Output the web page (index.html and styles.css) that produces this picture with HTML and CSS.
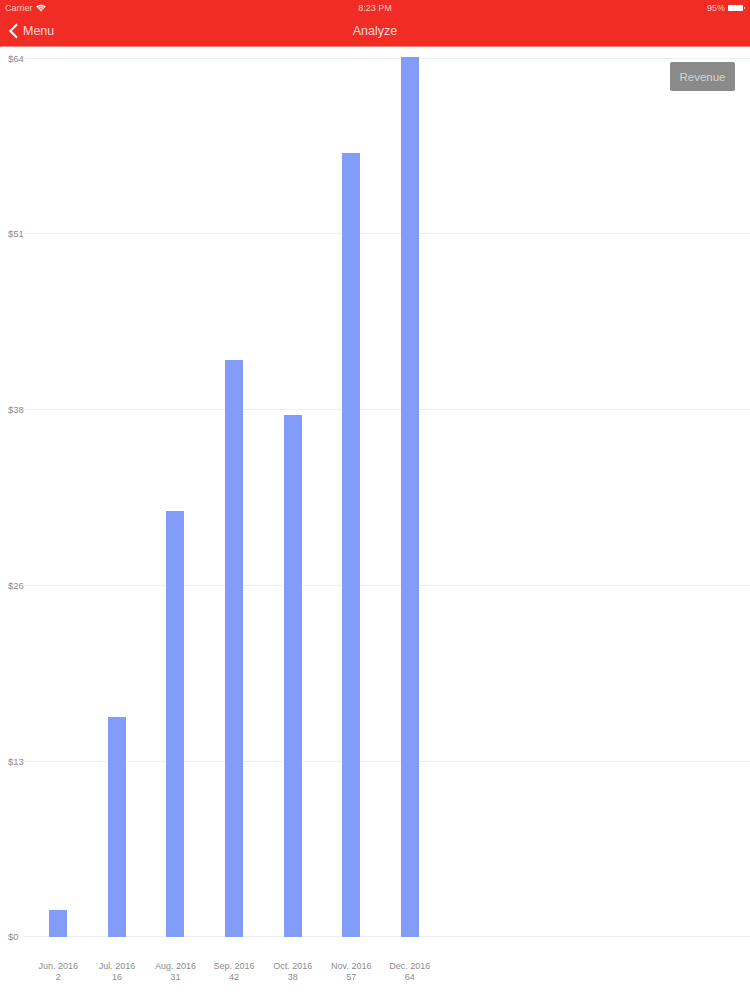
FILE: index.html
```html
<!DOCTYPE html>
<html>
<head>
    <link rel="stylesheet" href="styles.css">
</head>
<body>
    <header class="topbar">
        <div class="status-bar">
            <div class="status-left">
                <span>Carrier</span>
                <svg class="wifi" viewBox="0 0 12 9" width="10" height="8">
                    <path d="M6 8.6 L0.2 2.8 C3.4 -0.3 8.6 -0.3 11.8 2.8 Z" fill="#fff" opacity="0.95"/>
                    <path d="M2 4.3 C4.3 2.3 7.7 2.3 10 4.3" fill="none" stroke="#f02c24" stroke-width="0.8"/>
                    <path d="M3.6 6 C5 4.9 7 4.9 8.4 6" fill="none" stroke="#f02c24" stroke-width="0.8"/>
                </svg>
            </div>
            <span class="status-time">8:23 PM</span>
            <div class="status-right">
                <span>95%</span>
                <span class="battery"></span>
            </div>
        </div>
        <nav class="nav-bar">
            <a class="back-link">
                <svg class="chevron" viewBox="0 0 11 18" width="11" height="16">
                    <path d="M9.5 1.5 L2 9 L9.5 16.5" fill="none" stroke="#fff" stroke-width="2.4"/>
                </svg>
                <span>Menu</span>
            </a>
            <span class="nav-title">Analyze</span>
        </nav>
    </header>

    <main class="chart">
        <div class="plot">
            <div class="grid-row"><span class="y-label">$64</span><span class="grid-line"></span></div>
            <div class="grid-row"><span class="y-label">$51</span><span class="grid-line"></span></div>
            <div class="grid-row"><span class="y-label">$38</span><span class="grid-line"></span></div>
            <div class="grid-row"><span class="y-label">$26</span><span class="grid-line"></span></div>
            <div class="grid-row"><span class="y-label">$13</span><span class="grid-line"></span></div>
            <div class="grid-row"><span class="y-label">$0</span><span class="grid-line"></span></div>

            <div class="bars">
                <div class="bar-slot"><div class="bar" style="height: 27.5px"></div></div>
                <div class="bar-slot"><div class="bar" style="height: 220px"></div></div>
                <div class="bar-slot"><div class="bar" style="height: 426px"></div></div>
                <div class="bar-slot"><div class="bar" style="height: 577.5px"></div></div>
                <div class="bar-slot"><div class="bar" style="height: 522.5px"></div></div>
                <div class="bar-slot"><div class="bar" style="height: 784px"></div></div>
                <div class="bar-slot"><div class="bar" style="height: 880px"></div></div>
            </div>

            <button class="revenue-btn">Revenue</button>
        </div>

        <div class="x-axis">
            <div class="x-label">Jun. 2016<br>2</div>
            <div class="x-label">Jul. 2016<br>16</div>
            <div class="x-label">Aug. 2016<br>31</div>
            <div class="x-label">Sep. 2016<br>42</div>
            <div class="x-label">Oct. 2016<br>38</div>
            <div class="x-label">Nov. 2016<br>57</div>
            <div class="x-label">Dec. 2016<br>64</div>
        </div>
    </main>
</body>
</html>
```

FILE: styles.css
```css
body {
    margin: 0;
    padding: 0;
    height: 1000px;
    overflow: hidden;
    background: #fff;
    font-family: "Liberation Sans", Arial, sans-serif;
}

.topbar {
    height: 46px;
    background: #f02c24;
    color: #fff;
    border-bottom: 1px solid #f6807b;
}

.status-bar {
    height: 15px;
    padding: 0 5px;
    display: flex;
    align-items: center;
    justify-content: space-between;
    position: relative;
    font-size: 9px;
    color: rgba(255, 255, 255, 0.75);
}

.status-left,
.status-right {
    display: flex;
    align-items: center;
    gap: 3px;
}

.status-time {
    position: absolute;
    left: 0;
    right: 0;
    text-align: center;
}

/* little nub on the right of the battery */
.battery {
    width: 15px;
    height: 6px;
    margin-right: 2px;
    position: relative;
    display: block;
    background: #fff;
    border-radius: 1px;
}

.battery::after {
    content: "";
    position: absolute;
    left: 16px;
    top: 2px;
    width: 1px;
    height: 2px;
    background: rgba(255, 255, 255, 0.7);
}

.nav-bar {
    height: 31px;
    position: relative;
    display: flex;
    align-items: center;
    font-size: 12.5px;
}

.back-link {
    display: flex;
    align-items: center;
    gap: 4px;
    padding-left: 8px;
    color: rgba(255, 255, 255, 0.85);
}

.nav-title {
    position: absolute;
    left: 0;
    right: 0;
    text-align: center;
    color: rgba(255, 255, 255, 0.85);
}

.plot {
    position: relative;
    height: 891px;
    margin-top: 1px;
    padding-top: 4px;
    display: flex;
    flex-direction: column;
    justify-content: space-between;
}

.grid-row {
    height: 12px;
    display: flex;
    align-items: center;
    padding-left: 8px;
    gap: 1px;
}

.y-label {
    width: 15px;
    flex-shrink: 0;
    font-size: 9.5px;
    color: #8c8c8c;
}

.grid-line {
    flex: 1;
    height: 1px;
    background: #edf0f0;
}

.bars {
    position: absolute;
    left: 29px;
    bottom: 6px;
    display: flex;
    align-items: flex-end;
}

.bar-slot {
    width: 58.6px;
    display: flex;
    justify-content: center;
}

.bar {
    width: 18px;
    background: #829df9;
}

.revenue-btn {
    position: absolute;
    top: 14px;
    right: 15px;
    width: 65px;
    height: 29px;
    padding: 0;
    border: none;
    border-radius: 2px;
    background: #8a8a8a;
    color: #d4d4d4;
    font-family: inherit;
    font-size: 11.5px;
}

.x-axis {
    display: flex;
    padding-left: 29px;
    margin-top: 18px;
}

.x-label {
    width: 58.6px;
    text-align: center;
    font-size: 9px;
    line-height: 10.5px;
    color: #8c8c8c;
    white-space: nowrap;
}
```
